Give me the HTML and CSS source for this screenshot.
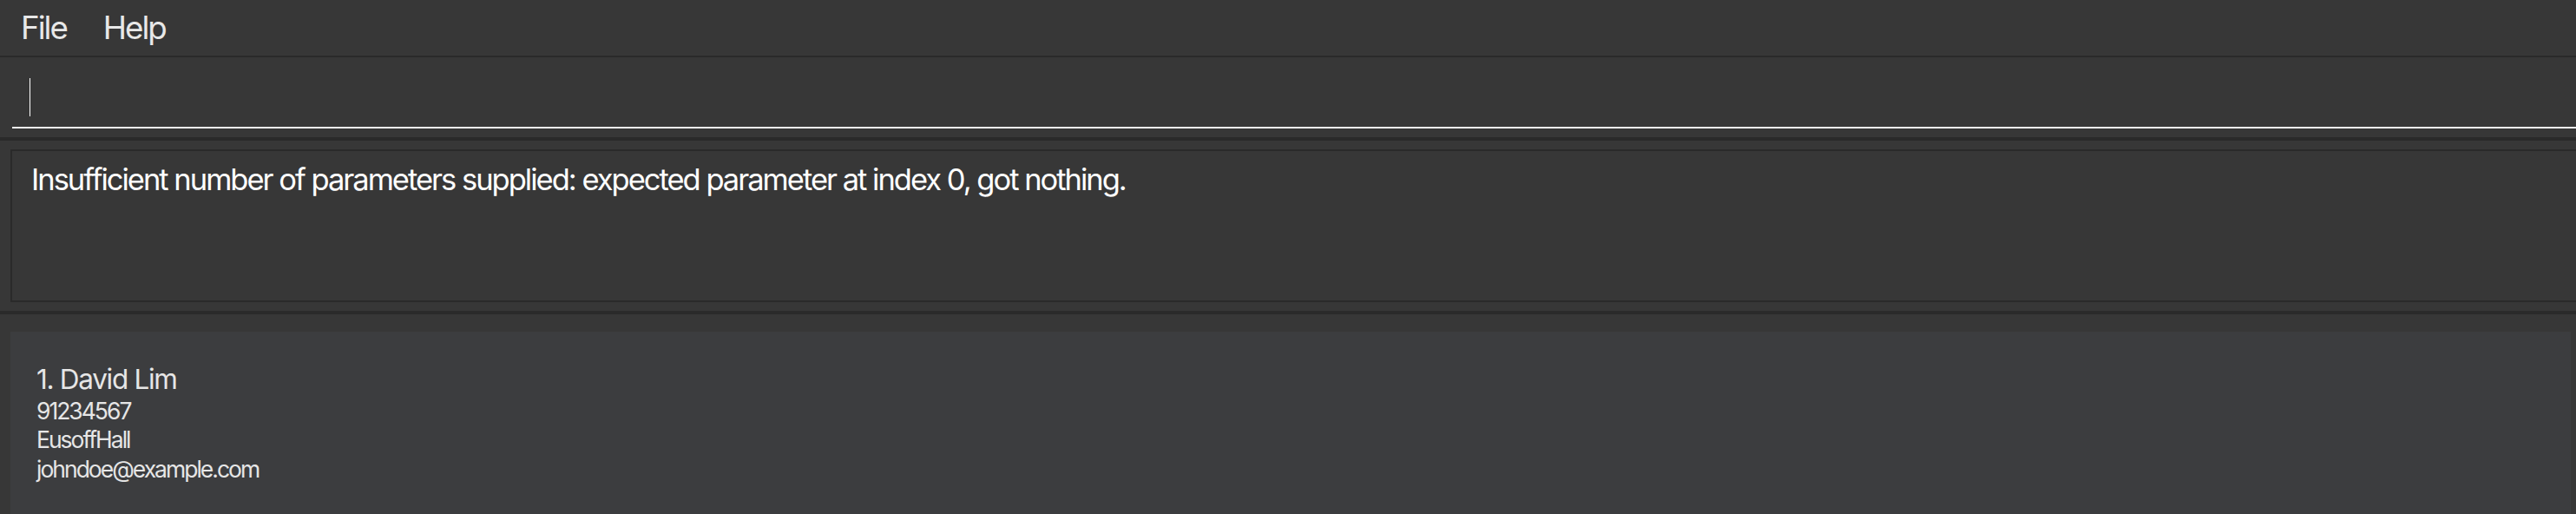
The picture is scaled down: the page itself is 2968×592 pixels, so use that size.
FILE: index.html
```html
<!DOCTYPE html>
<html>
<head>
<meta charset="utf-8">
<link rel="stylesheet" href="styles.css">
</head>
<body>
<div class="app">
  <nav class="menubar">
    <span class="menu-item">File</span>
    <span class="menu-item">Help</span>
  </nav>
  <section class="command">
    <div class="command-field"><span class="caret"></span></div>
  </section>
  <div class="splitter"></div>
  <section class="result">
    <div class="result-box">
      <p class="result-text">Insufficient number of parameters supplied: expected parameter at index 0, got nothing.</p>
    </div>
  </section>
  <div class="splitter"></div>
  <section class="list">
    <div class="card">
      <div class="name">1. David Lim</div>
      <div class="detail">91234567</div>
      <div class="detail">EusoffHall</div>
      <div class="detail">johndoe@example.com</div>
    </div>
  </section>
</div>
</body>
</html>
```
FILE: styles.css
```css
html, body {
  margin: 0;
  padding: 0;
  background: #373737;
  overflow: hidden;
}
.app {
  width: 2968px;
  height: 592px;
  display: flex;
  flex-direction: column;
  font-family: "Inter", "Liberation Sans", sans-serif;
}
.app > * {
  flex-shrink: 0;
}
.menubar {
  height: 64px;
  border-bottom: 2px solid #2a2a2a;
  display: flex;
  align-items: flex-start;
  gap: 42px;
  padding-left: 24px;
}
.menu-item {
  color: #e8e8e8;
  font-size: 36.7px;
  line-height: 64px;
  letter-spacing: -2px;
}
.command {
  height: 92px;
  box-sizing: border-box;
  padding: 24px 0 0 14px;
}
.command-field {
  height: 58px;
  box-sizing: border-box;
  border-bottom: 2px solid #f0f0f0;
  padding-left: 20px;
}
.caret {
  display: block;
  width: 1px;
  height: 44px;
  background: #ffffff;
}
.splitter {
  height: 4px;
  background: #2a2a2a;
}
.result {
  height: 196px;
  box-sizing: border-box;
  padding: 10px 0 10px 12px;
}
.result-box {
  height: 176px;
  box-sizing: border-box;
  border: 2px solid #2a2a2a;
  border-right: none;
  padding: 12px 0 0 22px;
}
.result-text {
  margin: 0;
  color: #ffffff;
  font-size: 34.5px;
  line-height: 42px;
  letter-spacing: -2px;
  white-space: nowrap;
}
.list {
  flex: 1;
  padding: 20px 6px 0 12px;
}
.card {
  background: #3c3d3f;
  height: 220px;
  padding: 34.5px 0 0 30px;
  box-sizing: border-box;
  color: #e6e6e6;
}
.name {
  font-size: 31.5px;
  line-height: 40px;
  letter-spacing: -1.3px;
}
.detail {
  font-size: 26.5px;
  line-height: 33.6px;
  letter-spacing: -2px;
}
```
